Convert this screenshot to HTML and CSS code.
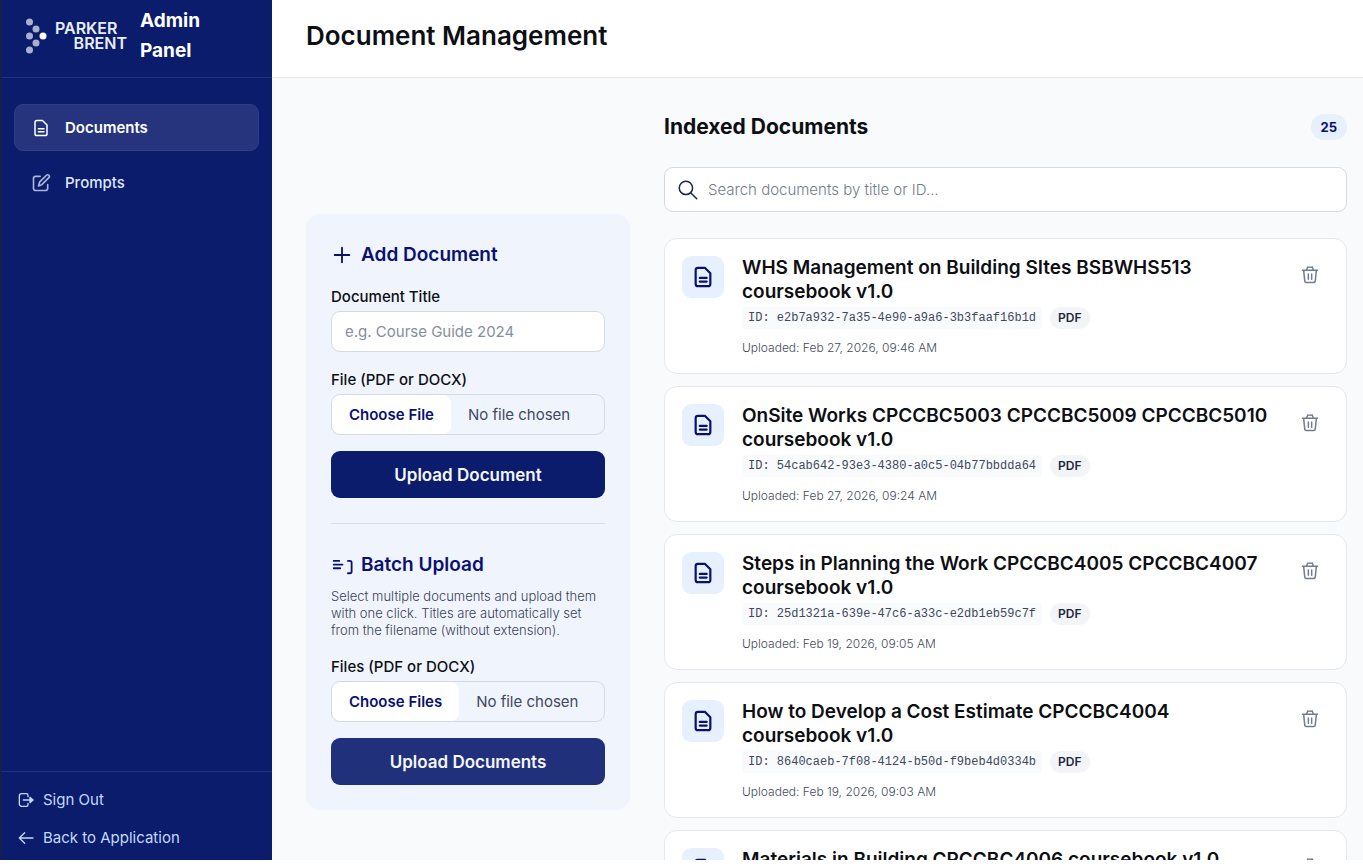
FILE: index.html
```html
<!DOCTYPE html>
<html lang="en">
<head>
<meta charset="utf-8">
<meta name="viewport" content="width=device-width, initial-scale=1">
<title>Document Management</title>
<link rel="stylesheet" href="styles.css">
</head>
<body>
<svg class="sprite" aria-hidden="true">
  <symbol id="i-doc" viewBox="0 0 24 24"><path d="M6.500 2h7.500l6 6v11.500a2.500 2.500 0 0 1-2.500 2.500h-11a2.500 2.500 0 0 1-2.500-2.500v-15A2.500 2.500 0 0 1 6.500 2zM8.500 13h7.500M8.500 17h7.500"/></symbol>
  <symbol id="i-edit" viewBox="0 0 24 24"><path d="M11 4H5.500A2.500 2.500 0 0 0 3 6.500v12A2.500 2.500 0 0 0 5.500 21h12a2.500 2.500 0 0 0 2.500-2.500V14M18.500 2.700a2.050 2.050 0 0 1 2.900 2.900L13 14l-4 1.500L10.300 11z"/></symbol>
  <symbol id="i-out" viewBox="0 0 24 24"><path d="M15 7V5a2.500 2.500 0 0 0-2.500-2.500h-7A3.500 3.500 0 0 0 2 6v12a3.500 3.500 0 0 0 3.500 3.500h7A2.500 2.500 0 0 0 15 19v-2M8 12h14"/><path class="solid" d="M18 8l4.500 4-4.500 4z"/></symbol>
  <symbol id="i-back" viewBox="0 0 24 24"><path d="M22.500 12H2M10 4l-8 8 8 8"/></symbol>
  <symbol id="i-plus" viewBox="0 0 24 24"><path d="M12 4v16M4 12h16"/></symbol>
  <symbol id="i-batch" viewBox="0 0 24 24"><path d="M3 7.500h6M3 11.500h9.500M3 15.500h7M18.500 7.500h2a2 2 0 0 1 2 2V19a2 2 0 0 1-2 2h-2"/></symbol>
  <symbol id="i-search" viewBox="0 0 24 24"><circle cx="9.500" cy="9.500" r="8"/><path d="M15.500 15.500l7 7"/></symbol>
  <symbol id="i-trash" viewBox="0 0 24 24"><path d="M2 5.500h20M7.500 5.500l1-3.200a1 1 0 0 1 1-.8h5a1 1 0 0 1 1 .8l1 3.200M3.500 5.500l1.500 14.700a2 2 0 0 0 2 1.800h10a2 2 0 0 0 2-1.800L20.500 5.500M9.800 10.500v7M14.200 10.500v7"/></symbol>
</svg>
<div class="app">
  <aside class="sidebar">
    <div class="brand">
      <svg class="brand-mark" viewBox="0 0 22 36" aria-hidden="true"><g class="dim"><circle cx="4.500" cy="4" r="3.500"/><circle cx="11" cy="11" r="3.500"/><circle cx="4.500" cy="18" r="3.500"/><circle cx="11" cy="25" r="3.500"/><circle cx="4.500" cy="32" r="3.500"/></g><circle cx="18" cy="18" r="3.500"/></svg>
      <div class="brand-name"><span>PARKER</span><span>BRENT</span></div>
      <div class="brand-title">Admin Panel</div>
    </div>
    <nav class="nav">
      <a class="nav-item active" href="#documents"><svg class="icon i20"><use href="#i-doc"/></svg>Documents</a>
      <a class="nav-item" href="#prompts"><svg class="icon i20"><use href="#i-edit"/></svg>Prompts</a>
    </nav>
    <div class="side-foot">
      <button class="foot-link" type="button"><svg class="icon i16"><use href="#i-out"/></svg>Sign Out</button>
      <a class="foot-link" href="#app"><svg class="icon i16"><use href="#i-back"/></svg>Back to Application</a>
    </div>
  </aside>
  <main class="main">
    <header class="topbar"><h1>Document Management</h1></header>
    <div class="content">
      <section class="panel">
        <form class="form">
          <h2><svg class="icon i22"><use href="#i-plus"/></svg>Add Document</h2>
          <label for="title">Document Title</label>
          <input class="text" id="title" type="text" placeholder="e.g. Course Guide 2024">
          <label for="file">File (PDF or DOCX)</label>
          <input class="file" id="file" type="file" accept=".pdf,.docx">
          <button class="primary" type="button">Upload Document</button>
        </form>
        <form class="form batch">
          <h2><svg class="icon i22"><use href="#i-batch"/></svg>Batch Upload</h2>
          <p>Select multiple documents and upload them with one click. Titles are automatically set from the filename (without extension).</p>
          <label for="files">Files (PDF or DOCX)</label>
          <input class="file" id="files" type="file" multiple accept=".pdf,.docx">
          <button class="primary muted" type="button">Upload Documents</button>
        </form>
      </section>
      <section class="index">
        <div class="index-head"><h2>Indexed Documents</h2><span class="count">25</span></div>
        <div class="search">
          <svg class="icon i20"><use href="#i-search"/></svg>
          <input type="search" aria-label="Search documents" placeholder="Search documents by title or ID...">
        </div>
        <ul class="list">
          <li class="doc">
            <span class="tile"><svg class="icon i22"><use href="#i-doc"/></svg></span>
            <div class="info"><h3>WHS Management on Building SItes BSBWHS513 coursebook v1.0</h3>
              <div class="meta"><code>ID: e2b7a932-7a35-4e90-a9a6-3b3faaf16b1d</code><span class="type">PDF</span></div>
              <time>Uploaded: Feb 27, 2026, 09:46 AM</time></div>
            <button class="trash" type="button" aria-label="Delete"><svg class="icon i18"><use href="#i-trash"/></svg></button>
          </li>
          <li class="doc">
            <span class="tile"><svg class="icon i22"><use href="#i-doc"/></svg></span>
            <div class="info"><h3>OnSite Works CPCCBC5003 CPCCBC5009 CPCCBC5010 coursebook v1.0</h3>
              <div class="meta"><code>ID: 54cab642-93e3-4380-a0c5-04b77bbdda64</code><span class="type">PDF</span></div>
              <time>Uploaded: Feb 27, 2026, 09:24 AM</time></div>
            <button class="trash" type="button" aria-label="Delete"><svg class="icon i18"><use href="#i-trash"/></svg></button>
          </li>
          <li class="doc">
            <span class="tile"><svg class="icon i22"><use href="#i-doc"/></svg></span>
            <div class="info"><h3>Steps in Planning the Work CPCCBC4005 CPCCBC4007 coursebook v1.0</h3>
              <div class="meta"><code>ID: 25d1321a-639e-47c6-a33c-e2db1eb59c7f</code><span class="type">PDF</span></div>
              <time>Uploaded: Feb 19, 2026, 09:05 AM</time></div>
            <button class="trash" type="button" aria-label="Delete"><svg class="icon i18"><use href="#i-trash"/></svg></button>
          </li>
          <li class="doc">
            <span class="tile"><svg class="icon i22"><use href="#i-doc"/></svg></span>
            <div class="info"><h3>How to Develop a Cost Estimate CPCCBC4004 coursebook v1.0</h3>
              <div class="meta"><code>ID: 8640caeb-7f08-4124-b50d-f9beb4d0334b</code><span class="type">PDF</span></div>
              <time>Uploaded: Feb 19, 2026, 09:03 AM</time></div>
            <button class="trash" type="button" aria-label="Delete"><svg class="icon i18"><use href="#i-trash"/></svg></button>
          </li>
          <li class="doc">
            <span class="tile"><svg class="icon i22"><use href="#i-doc"/></svg></span>
            <div class="info"><h3>Materials in Building CPCCBC4006 coursebook v1.0</h3></div>
            <button class="trash" type="button" aria-label="Delete"><svg class="icon i18"><use href="#i-trash"/></svg></button>
          </li>
        </ul>
      </section>
    </div>
  </main>
</div>
</body>
</html>
```
FILE: styles.css
```css
*, *::before, *::after { box-sizing: border-box; }
body { margin: 0; padding-bottom: 6px; height: 100vh; overflow: hidden; background: #fff; color: #0d0f14; font: 15px/20px Inter, sans-serif; }
h1, h2, h3, p, ul { margin: 0; padding: 0; }
a { color: inherit; text-decoration: none; }
button, input { font: inherit; }
.sprite { position: absolute; width: 0; height: 0; }
.icon { flex: none; fill: none; stroke: currentColor; stroke-width: 2; stroke-linecap: round; stroke-linejoin: round; }
.solid { fill: currentColor; }
.i16 { width: 16px; height: 16px; }
.i18 { width: 18px; height: 18px; }
.i20 { width: 20px; height: 20px; }
.i22 { width: 22px; height: 22px; }

.app { display: flex; height: 100%; overflow: hidden; }
.sidebar { flex: none; width: 272px; display: flex; flex-direction: column; background: #0a1c6b; border-left: 1px solid #20222a; color: #fff; }
.brand { display: flex; align-items: center; height: 78px; padding: 0 24px 6px; border-bottom: 1px solid #1b3285; }
.brand-mark { flex: none; width: 22px; height: 36px; fill: #fff; }
.brand-mark .dim { opacity: .65; }
.brand-name { display: flex; flex-direction: column; width: 72px; margin-left: 8px; color: #e9ecf8; font-size: 16px; line-height: 15px; font-weight: 600; }
.brand-name span:last-child { align-self: flex-end; }
.brand-title { width: 72px; margin-left: 13px; font-size: 19px; line-height: 30px; font-weight: 700; }
.nav { flex: 1; display: flex; flex-direction: column; gap: 8px; padding: 26px 13px; }
.nav-item { display: flex; align-items: center; gap: 14px; height: 47px; padding: 0 16px; border: 1px solid transparent; border-radius: 9px; color: #dfe6fa; font-weight: 500; }
.nav-item .icon { opacity: .75; stroke-width: 2; }
.nav-item.active { background: #25347d; border-color: #2f3f87; color: #fff; font-weight: 600; }
.nav-item.active .icon { width: 18px; height: 18px; margin: 1px; opacity: 1; }
.side-foot { display: flex; flex-direction: column; gap: 18px; padding: 18px 17px 12px; border-top: 1px solid #1b3285; }
.foot-link { display: flex; align-items: center; gap: 9px; padding: 0; border: 0; background: none; color: #c5d8fb; line-height: 20px; text-align: left; }

.main { flex: 1; min-width: 0; display: flex; flex-direction: column; background: #f9fafc; }
.topbar { flex: none; display: flex; align-items: center; height: 78px; padding: 0 34px 6px; background: #fff; border-bottom: 1px solid #e6e8ec; }
h1 { font-size: 26px; line-height: 32px; font-weight: 600; }
.content { flex: 1; min-height: 0; display: flex; align-items: flex-start; gap: 34px; padding: 34px 16px 0 34px; }
.panel { flex: none; width: 324px; margin-top: 102px; padding: 26px 25px 25px; border-radius: 14px; background: #f0f4fd; }
.form { display: flex; flex-direction: column; }
.form h2 { display: flex; align-items: center; gap: 8px; margin-bottom: 18px; color: #0a1172; font-size: 19px; line-height: 30px; font-weight: 600; }
.form label { margin-bottom: 5px; font-weight: 500; font-size: 15px; line-height: 18px; }
.text, .file { width: 100%; height: 41px; border: 1px solid #d5d9e2; border-radius: 9px; color: #3f4860; }
.text { margin-bottom: 19px; padding: 0 13px; background: #fff; }
::placeholder { color: #868e9f; opacity: 1; }
.file { overflow: hidden; line-height: 39px; margin-bottom: 16px; }
.file::file-selector-button { height: 39px; margin: 0 17px 0 0; padding: 0 17px; border: 0; border-radius: 8px; background: #fff; color: #0a1172; font: 600 15px/39px Inter, sans-serif; }
.primary { height: 47px; border: 0; border-radius: 9px; background: #0a1c6b; color: #f4f6fd; font-size: 17px; font-weight: 600; }
.primary.muted { background: #20307a; }
.batch { margin-top: 25px; padding-top: 26px; border-top: 1px solid #d6dcec; }
.batch h2 { margin-bottom: 8px; }
.batch p { margin-bottom: 19px; color: #384158; font-size: 13px; line-height: 17px; font-weight: 300; }

.index { flex: 1; min-width: 0; }
.index-head { display: flex; align-items: center; justify-content: space-between; height: 30px; margin-bottom: 25px; }
.index-head h2 { font-size: 21px; line-height: 30px; font-weight: 700; }
.count { padding: 0 10px; border-radius: 13px; background: #e6f0ff; color: #0a1172; font-size: 13px; line-height: 26px; font-weight: 700; }
.search { display: flex; align-items: center; gap: 10px; height: 45px; margin-bottom: 26px; padding: 0 13px; border: 1px solid #d5d9e2; border-radius: 9px; background: #fff; }
.search .icon { color: #1b2450; stroke-width: 1.800; }
.search input { flex: 1; min-width: 0; padding: 0; border: 0; outline: 0; background: none; }
.search ::placeholder { color: #737b8e; font-weight: 300; }
.list { display: flex; flex-direction: column; gap: 12px; list-style: none; }
.doc { display: flex; align-items: flex-start; padding: 17px; border: 1px solid #e5e8ee; border-radius: 13px; background: #fff; }
.tile { flex: none; display: grid; place-items: center; width: 42px; height: 42px; border-radius: 9px; background: #e6f0ff; color: #0a1172; }
.tile .icon { stroke-width: 2.400; }
.info { flex: 1; min-width: 0; margin: 0 16px 0 18px; }
h3 { font-size: 19px; line-height: 24px; font-weight: 600; }
.meta { display: flex; align-items: center; gap: 8px; margin: 3px 0 11px; }
code { padding: 0 6px; border-radius: 4px; background: #f8fafc; color: #3f4860; font: 12px/22px "Liberation Mono", monospace; }
.type { padding: 0 8px; border-radius: 11px; background: #f2f4f7; color: #22263a; font-size: 12px; line-height: 22px; font-weight: 600; }
time { display: block; color: #444c5c; font-size: 12px; line-height: 16px; font-weight: 300; }
.trash { display: flex; padding: 10px; border: 0; background: none; color: #737c90; }
```
